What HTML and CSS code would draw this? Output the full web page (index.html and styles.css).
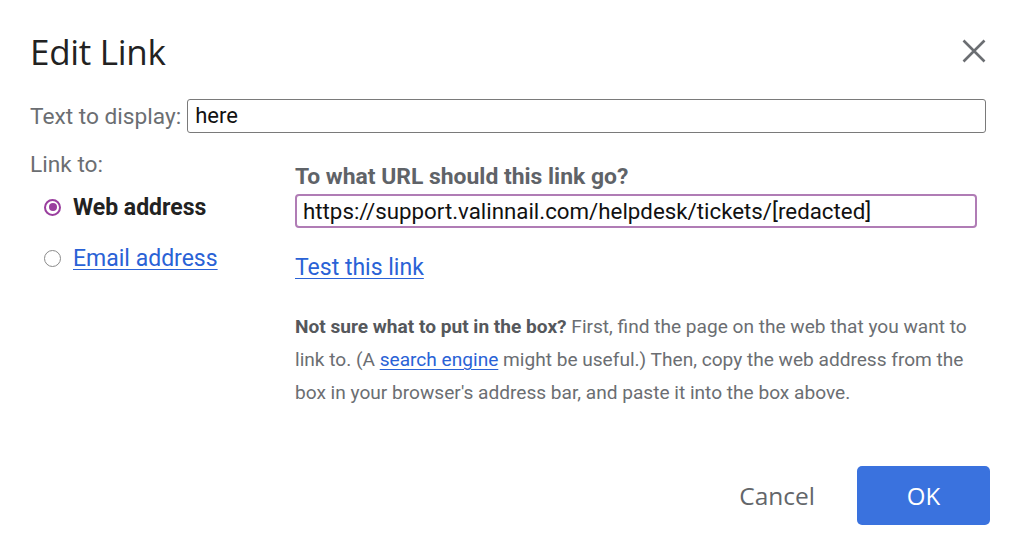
FILE: index.html
```html
<!DOCTYPE html>
<html>
<head>
<meta charset="utf-8">
<link rel="stylesheet" href="styles.css">
</head>
<body>
<div class="dialog">
  <div class="header">
    <h1 class="title">Edit Link</h1>
    <button class="close" aria-label="Close">
      <svg width="24" height="24" viewBox="0 0 24 24"><path d="M1.5 1.5 L22.5 22.5 M22.5 1.5 L1.5 22.5" stroke="#6b6e72" stroke-width="2.6" fill="none"/></svg>
    </button>
  </div>
  <div class="display-row">
    <span class="label">Text to display:</span>
    <div class="textbox">here</div>
  </div>
  <div class="main">
    <div class="left">
      <div class="label linkto">Link to:</div>
      <div class="radio-row">
        <span class="radio checked"></span>
        <span class="radio-text bold">Web address</span>
      </div>
      <div class="radio-row second">
        <span class="radio"></span>
        <a class="radio-text link">Email address</a>
      </div>
    </div>
    <div class="right">
      <div class="question">To what URL should this link go?</div>
      <div class="urlbox">https://support.valinnail.com/helpdesk/tickets/[redacted]</div>
      <a class="test link">Test this link</a>
      <p class="help"><b>Not sure what to put in the box?</b> First, find the page on the web that you want to link to. (A <a class="link">search engine</a> might be useful.) Then, copy the web address from the box in your browser's address bar, and paste it into the box above.</p>
    </div>
  </div>
  <div class="footer">
    <button class="cancel">Cancel</button>
    <button class="ok">OK</button>
  </div>
</div>
</body>
</html>
```
FILE: styles.css
```css
html, body {
  margin: 0;
  padding: 0;
  background: #ffffff;
}
body {
  font-family: Roboto, "Liberation Sans", sans-serif;
  width: 1024px;
  height: 541px;
  overflow: hidden;
}
.dialog {
  padding: 28px 34px 0 30px;
  display: flex;
  flex-direction: column;
}
.header {
  display: flex;
  justify-content: space-between;
  align-items: flex-start;
  height: 70px;
}
.title {
  margin: 0;
  font-family: "Open Sans", Roboto, sans-serif;
  font-weight: 400;
  font-size: 35px;
  line-height: 48px;
  color: #222222;
  letter-spacing: -0.3px;
}
.close {
  border: 0;
  background: none;
  padding: 0;
  margin: 11px 4px 0 0;
  width: 24px;
  height: 24px;
  cursor: pointer;
}
.display-row {
  display: flex;
  align-items: center;
  gap: 6px;
  height: 36px;
  margin-right: 4px;
}
.label {
  font-size: 22.7px;
  color: #6b6e72;
}
.textbox {
  flex: 1;
  height: 32px;
  border: 1px solid #7a7a7a;
  border-radius: 3px;
  font-size: 22px;
  line-height: 32px;
  padding: 0 7px;
  color: #111;
}
.main {
  display: flex;
  margin-top: 16px;
}
.left {
  width: 265px;
  flex: none;
}
.linkto {
  line-height: 30px;
}
.radio-row {
  display: flex;
  align-items: center;
  margin-top: 12px;
  padding-left: 14px;
  height: 30px;
}
.radio-row.second {
  margin-top: 21px;
}
.radio {
  box-sizing: border-box;
  width: 17px;
  height: 17px;
  border: 1.5px solid #8a8a8a;
  border-radius: 50%;
  position: relative;
  margin-right: 12px;
  flex: none;
}
.radio.checked {
  border: 2px solid #9a3e9e;
}
.radio.checked::after {
  content: "";
  position: absolute;
  left: 2.5px;
  top: 2.5px;
  width: 8px;
  height: 8px;
  border-radius: 50%;
  background: #9a3e9e;
}
.radio-text {
  font-size: 23px;
  color: #222;
}
.bold {
  font-weight: 700;
}
.link {
  color: #2a62d6;
  text-decoration: underline;
  text-underline-offset: 3px;
  text-decoration-thickness: 1px;
}
.right {
  flex: 1;
  display: flex;
  flex-direction: column;
  align-items: flex-start;
  padding-right: 13px;
}
.question {
  font-size: 22.9px;
  font-weight: 700;
  color: #5f6368;
  line-height: 24px;
  margin-top: 15px;
}
.urlbox {
  margin-top: 5px;
  align-self: stretch;
  height: 30px;
  border: 2px solid #b07cb5;
  border-radius: 4px;
  font-size: 22.3px;
  line-height: 30px;
  padding: 0 6px;
  color: #111;
}
.test {
  margin-top: 27px;
  font-size: 23px;
  line-height: 26px;
}
.help {
  margin: 29px 0 0 0;
  font-size: 19.1px;
  line-height: 33px;
  color: #6b6e72;
}
.help b {
  color: #55585c;
}
.footer {
  display: flex;
  justify-content: flex-end;
  align-items: center;
  margin-top: 57px;
  gap: 42px;
}
.cancel {
  border: 0;
  background: none;
  font-family: "Open Sans", Roboto, sans-serif;
  font-size: 24.5px;
  color: #63666a;
  padding: 0;
}
.ok {
  border: 0;
  width: 133px;
  height: 59px;
  border-radius: 5px;
  background: #3a72de;
  color: #fff;
  font-family: "Open Sans", Roboto, sans-serif;
  font-size: 24px;
  margin-right: 0;
}
```
